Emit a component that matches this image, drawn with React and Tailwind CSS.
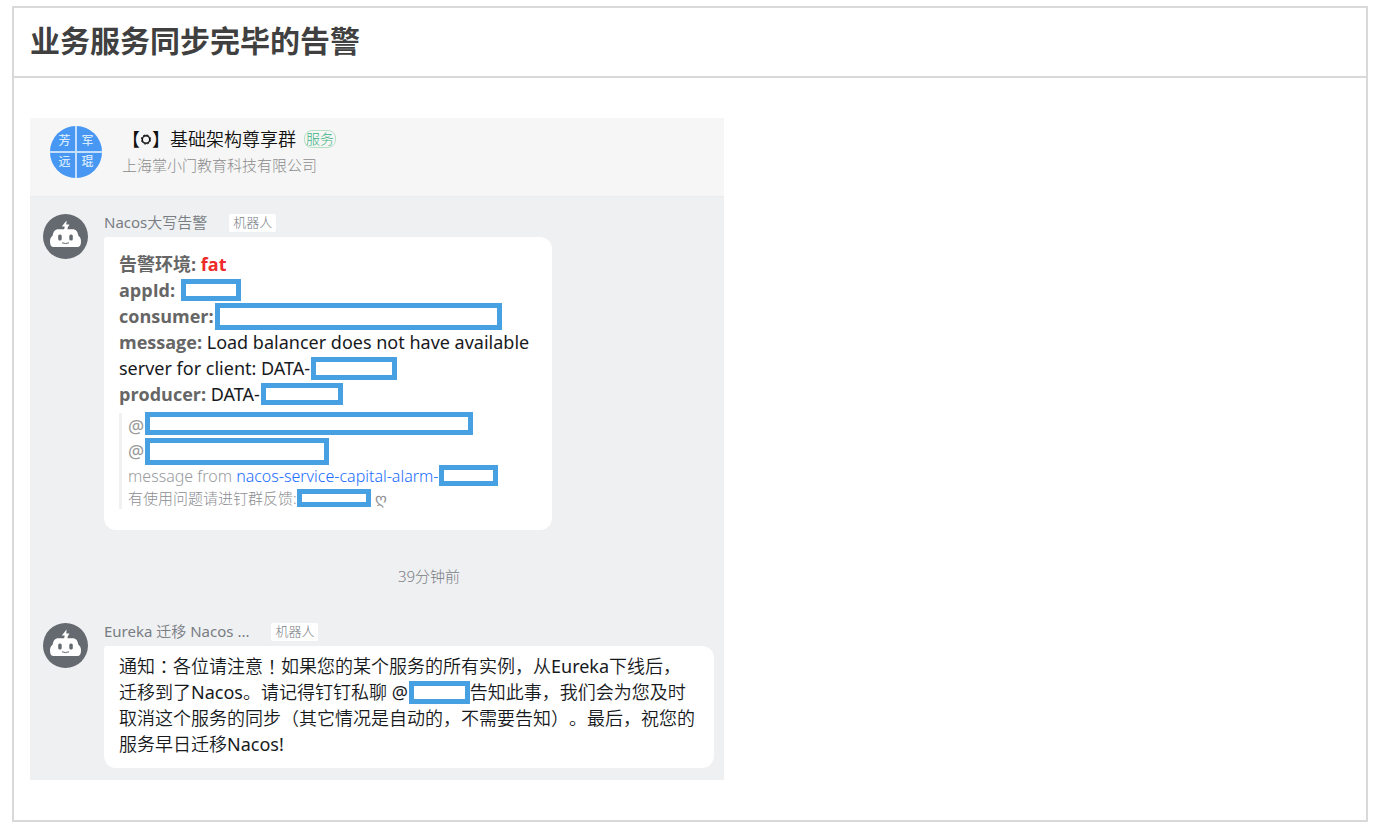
const SANS = "font-['Noto_Sans','Noto_Sans_CJK_SC',sans-serif]";

function Redacted({ className }) {
  return (
    <span
      aria-hidden="true"
      className={`inline-block shrink-0 border-[5px] border-[#46a0e2] bg-white ${className}`}
    />
  );
}

function GroupAvatar() {
  return (
    <div className="grid size-[52px] shrink-0 grid-cols-2 grid-rows-2 gap-[2px] overflow-hidden rounded-full bg-[#c3dffb] text-[12px] font-medium leading-none text-[#d5e9fd]">
      <span className="flex items-center justify-center bg-[#4897f3] pl-1 pt-1">芳</span>
      <span className="flex items-center justify-center bg-[#4897f3] pr-1 pt-1">军</span>
      <span className="flex items-center justify-center bg-[#4897f3] pb-2 pl-1">远</span>
      <span className="flex items-center justify-center bg-[#4897f3] pb-2 pr-1">琨</span>
    </div>
  );
}

function RobotAvatar() {
  return (
    <svg viewBox="0 0 45 45" className="size-[45px] shrink-0" aria-hidden="true">
      <circle cx="22.5" cy="22.5" r="22.5" fill="#656a70" />
      <path d="M23.600 6.500 18.800 12.600h2.900l-.7 3.400h3.400l.3-2.600 1.800-2.800h-3.200z" fill="#fff" />
      <path
        d="M15.500 15.200h14c3.600 0 5.400 2.600 5.900 6.600 1.700.9 2.600 3 2.600 5.600 0 3.600-1.300 5.600-3.600 5.600H10.600c-2.300 0-3.600-2-3.600-5.600 0-2.600.9-4.700 2.600-5.600.5-4 2.300-6.600 5.900-6.600z"
        fill="#fff"
      />
      <rect x="15.200" y="20.600" width="3.500" height="6" rx="1.500" fill="#656a70" />
      <rect x="26.300" y="20.600" width="3.500" height="6" rx="1.500" fill="#656a70" />
      <path d="M19 28.800q3.500 1.500 7 0" stroke="#656a70" fill="none" strokeWidth="1" />
    </svg>
  );
}

function Message({ name, children, bubble }) {
  return (
    <article className="flex items-start gap-4 pl-[13px] pr-[10px]">
      <RobotAvatar />
      <div className="min-w-0 flex-1">
        <header className="mb-[5px] flex h-[18px] items-center gap-[22px] text-[15px] leading-[16px] text-[#787d83]">
          <span className="pb-[2px] font-[350]">{name}</span>
          <span className="rounded-[2px] bg-white px-1 pb-[2px] text-[13px] font-light">机器人</span>
        </header>
        <div className={`rounded-xl rounded-tl-[3px] bg-white px-[15px] text-[18px] leading-[26px] text-[#171a1d] ${bubble}`}>
          {children}
        </div>
      </div>
    </article>
  );
}

function Line({ children, className = "h-[26px]" }) {
  return <p className={`flex items-center whitespace-pre ${className}`}>{children}</p>;
}

function Label({ children }) {
  return <strong className="font-['Open_Sans','Noto_Sans_CJK_SC',sans-serif] font-bold text-[#666]">{children}</strong>;
}

function Mark({ children }) {
  return <span className="font-['Noto_Sans_CJK_JP',sans-serif]">{children}</span>;
}

function Latin({ children }) {
  return <span className="font-normal">{children}</span>;
}

export default function App() {
  return (
    <main className={`bg-white pb-[6px] pl-[12px] pr-[6px] pt-[6px] [text-spacing-trim:space-all] ${SANS}`}>
      <section className="border-2 border-[#d9d9d9]">
        <h1 className="border-b-2 border-[#d9d9d9] px-4 pb-[15px] pt-[9px] font-['Noto_Sans_CJK_SC',sans-serif] text-[30px] font-bold leading-[44px] text-[#404040]">
          业务服务同步完毕的告警
        </h1>
        <div className="px-4 py-10">
          <div className="w-full max-w-[694px] bg-[#eff0f2] pb-3">
            <header className="flex h-[79px] items-start gap-5 border-b border-[#ebecee] bg-[#f6f6f6] pl-5 pt-2">
              <GroupAvatar />
              <div>
                <div className="flex h-[26px] items-center gap-2">
                  <h2 className="flex items-center text-[18px] font-[350] text-[#111]">
                    【
                    <svg viewBox="0 0 12 12" className="size-3" aria-hidden="true">
                      <circle cx="6" cy="6.500" r="3.700" fill="none" stroke="#111" strokeWidth="1.400" />
                      <circle cx="6" cy="6.500" r="4.600" fill="none" stroke="#111" strokeWidth="1" strokeDasharray="2.200 1.413" />
                    </svg>
                    】基础架构尊享群
                  </h2>
                  <span className="rounded-lg border border-[#b5e0c4] px-px text-[14px] font-light leading-[16px] text-[#3fb27f]">服务</span>
                </div>
                <p className="text-[15px] font-light leading-[26px] text-[#8c8c8c]">上海掌小门教育科技有限公司</p>
              </div>
            </header>

            <div className="pt-[17px]">
              <Message name={<><Latin>Nacos</Latin>大写告警</>} bubble="w-full max-w-[448px] pt-[14px] pb-[21px]">
                <Line><Label>告警环境: </Label><Label><span className="text-[#ee2a2a]">fat</span></Label></Line>
                <Line><Label>appId: </Label><Redacted className="ml-px h-[22px] w-[60px]" /></Line>
                <Line><Label>consumer:</Label><Redacted className="ml-px h-[27px] w-[287px]" /></Line>
                <Line><Label>message: </Label>Load balancer does not have available</Line>
                <Line>server for client: DATA-<Redacted className="ml-px h-[23px] w-[86px]" /></Line>
                <Line><Label>producer: </Label>DATA-<Redacted className="ml-px h-[22px] w-[82px]" /></Line>
                <blockquote className="mt-[6px] border-l-[3px] border-[#f0f1f2] pl-[6px] text-[#999]">
                  <Line className="h-[25px]">@<Redacted className="mb-1 ml-px h-[23px] w-[328px]" /></Line>
                  <Line>@<Redacted className="ml-px h-[27px] w-[184px]" /></Line>
                  <Line className="h-[23px] text-[16px] font-light text-[#999b9e]">
                    message from <a href="#alarm" className="text-[#1a6dff]">nacos-service-capital-alarm-</a>
                    <Redacted className="ml-px h-[21px] w-[59px]" />
                  </Line>
                  <Line className="h-[22px] text-[15px] font-light text-[#8c8e91]">
                    有使用问题请进钉群反馈:<Redacted className="h-[18px] w-[74px]" /> ღ
                  </Line>
                </blockquote>
              </Message>

              <p className="mb-[37px] mt-9 pl-[104px] text-center text-[15px] font-light leading-5 text-[#787d83]">
                <time>39分钟前</time>
              </p>

              <Message name={<><Latin>Eureka</Latin> 迁移 <Latin>Nacos ...</Latin></>} bubble="pt-[7px] pb-[11px] font-[350]">
                <Line>通知<Mark>：</Mark>各位请注意<Mark>！</Mark>如果您的某个服务的所有实例，从<Latin>Eureka</Latin>下线后，</Line>
                <Line>迁移到了<Latin>Nacos</Latin>。请记得钉钉私聊 <Latin>@</Latin><Redacted className="ml-px h-[23px] w-[61px]" />告知此事，我们会为您及时</Line>
                <Line>取消这个服务的同步（其它情况是自动的，不需要告知）。最后，祝您的</Line>
                <Line>服务早日迁移<Latin>Nacos!</Latin></Line>
              </Message>
            </div>
          </div>
        </div>
      </section>
    </main>
  );
}
